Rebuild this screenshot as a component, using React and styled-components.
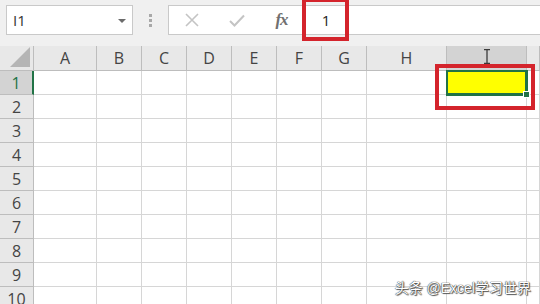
import React from "react";
import styled, { createGlobalStyle } from "styled-components";

const Global = createGlobalStyle`
  html, body { margin: 0; padding: 0; background: #ffffff; }
  body { width: 540px; height: 304px; overflow: hidden; font-family: "Open Sans", "Noto Sans", sans-serif; }
`;

const Page = styled.div`
  position: relative;
  width: 540px;
  height: 304px;
  overflow: hidden;
  background: #f0f0f0;
`;

const Toolbar = styled.div`
  display: flex;
  align-items: center;
  height: 46px;
  padding: 0 0 6px 6px;
  box-sizing: border-box;
  background: #f0f0f0;
`;

const NameBox = styled.div`
  display: flex;
  align-items: center;
  justify-content: space-between;
  width: 127px;
  height: 30px;
  box-sizing: border-box;
  padding: 0 6px 0 6px;
  background: #fff;
  border: 1px solid #c9c9c9;
  font-size: 15px;
  color: #333;
`;

const Caret = styled.span`
  width: 0;
  height: 0;
  border-left: 4px solid transparent;
  border-right: 4px solid transparent;
  border-top: 4px solid #6b6b6b;
  margin-top: 2px;
`;

const Grip = styled.div`
  display: flex;
  flex-direction: column;
  gap: 2px;
  margin: 0 16px 0 16px;
  span {
    width: 3px;
    height: 3px;
    background: #a8a8a8;
  }
`;

const FormulaBox = styled.div`
  position: relative;
  display: flex;
  align-items: center;
  flex: 1;
  height: 30px;
  box-sizing: border-box;
  background: #fff;
  border: 1px solid #c9c9c9;
  border-right: none;
`;

const IconSlot = styled.div`
  display: flex;
  align-items: center;
  justify-content: center;
  width: 45px;
  height: 100%;
  color: ${p => (p.$dark ? "#6a6a6a" : "#c4c4c4")};
`;

const Fx = styled.span`
  font-family: "Liberation Serif", "DejaVu Serif", serif;
  font-style: italic;
  font-weight: bold;
  font-size: 17px;
  color: #707070;
  letter-spacing: -1px;
`;

const FormulaValue = styled.div`
  position: relative;
  width: 44px;
  text-align: center;
  font-size: 15px;
  color: #222;
`;

const Mark = styled.div`
  position: absolute;
  border: 4px solid #d4242c;
  pointer-events: none;
`;

const Grid = styled.div`
  display: grid;
  grid-template-columns: 34px 63px repeat(6, 45px) 80px 80px 1fr;
  grid-auto-rows: 24px;
  grid-template-rows: 25px;
  background: #fff;
`;

const Head = styled.div`
  position: relative;
  display: flex;
  align-items: center;
  justify-content: center;
  box-sizing: border-box;
  background: ${p => (p.$active ? "#d3d3d3" : "#e8e8e8")};
  border-right: 1px solid #bdbdbd;
  border-bottom: 1px solid #bdbdbd;
  font-size: 16px;
  color: ${p => (p.$active ? "#217346" : "#444")};
  ${p => p.$rowActive && "border-right: 2px solid #217346;"}
`;

const Corner = styled(Head)`
  svg { position: absolute; right: 3px; bottom: 3px; }
`;

const Cell = styled.div`
  position: relative;
  box-sizing: border-box;
  border-right: 1px solid #d6d6d6;
  border-bottom: 1px solid #d6d6d6;
  background: ${p => (p.$fill ? "#ffff00" : "#fff")};
  ${p =>
    p.$selected &&
    `
    box-shadow: inset 0 0 0 1px #217346;
    outline: 2px solid #217346;
    outline-offset: -1px;
    z-index: 2;
    &::after {
      content: "";
      position: absolute;
      right: -4px;
      bottom: -4px;
      width: 5px;
      height: 5px;
      background: #217346;
      border: 1px solid #fff;
    }
  `}
`;

const Cursor = styled.svg`
  position: absolute;
  left: 36px;
  top: 3px;
`;

const Watermark = styled.div`
  position: absolute;
  right: 9px;
  bottom: 7px;
  font-family: "Liberation Sans", "Noto Sans CJK SC", sans-serif;
  font-size: 14px;
  color: #fff;
  text-shadow: 0 0 1px #333, 0 0 1px #333, 1px 1px 1px #555;
  z-index: 5;
`;

const columns = ["A", "B", "C", "D", "E", "F", "G", "H", "I", ""];
const rows = [1, 2, 3, 4, 5, 6, 7, 8, 9, 10];

export default function App() {
  return (
    <Page>
      <Global />
      <Toolbar>
        <NameBox>
          <span>I1</span>
          <Caret />
        </NameBox>
        <Grip>
          <span />
          <span />
          <span />
        </Grip>
        <FormulaBox>
          <IconSlot>
            <svg width="14" height="14" viewBox="0 0 14 14">
              <path d="M1 1L13 13M13 1L1 13" stroke="currentColor" strokeWidth="1.6" />
            </svg>
          </IconSlot>
          <IconSlot>
            <svg width="16" height="13" viewBox="0 0 16 13">
              <path d="M1 7L5.5 11.5L15 1.5" stroke="currentColor" strokeWidth="2" fill="none" />
            </svg>
          </IconSlot>
          <IconSlot $dark>
            <Fx>fx</Fx>
          </IconSlot>
          <FormulaValue>
            1
            <Mark style={{ left: -2, right: -1, top: -12, bottom: -11 }} />
          </FormulaValue>
        </FormulaBox>
      </Toolbar>
      <Grid>
        <Corner>
          <svg width="20" height="20" viewBox="0 0 20 20">
            <path d="M20 0L20 20L0 20Z" fill="#b5b5b5" />
          </svg>
        </Corner>
        {columns.map((c, i) => (
          <Head key={"h" + i} $active={c === "I"} style={c === "I" ? { color: "#444" } : undefined}>
            {c === "I" ? (
              <Cursor width="8" height="15" viewBox="0 0 8 15">
                <path d="M1 0.5H7M4 0.5V14.5M1 14.5H7" stroke="#3a3a3a" strokeWidth="1.3" fill="none" />
              </Cursor>
            ) : (
              c
            )}
          </Head>
        ))}
        {rows.map(r => (
          <React.Fragment key={r}>
            <Head $active={r === 1} $rowActive={r === 1}>
              {r}
            </Head>
            {columns.map((c, i) => {
              const sel = r === 1 && c === "I";
              return (
                <Cell key={i} $selected={sel} $fill={sel}>
                  {sel && <Mark style={{ left: -12, right: -9, top: -7, bottom: -16 }} />}
                </Cell>
              );
            })}
          </React.Fragment>
        ))}
      </Grid>
      <Watermark>头条 @Excel学习世界</Watermark>
    </Page>
  );
}
